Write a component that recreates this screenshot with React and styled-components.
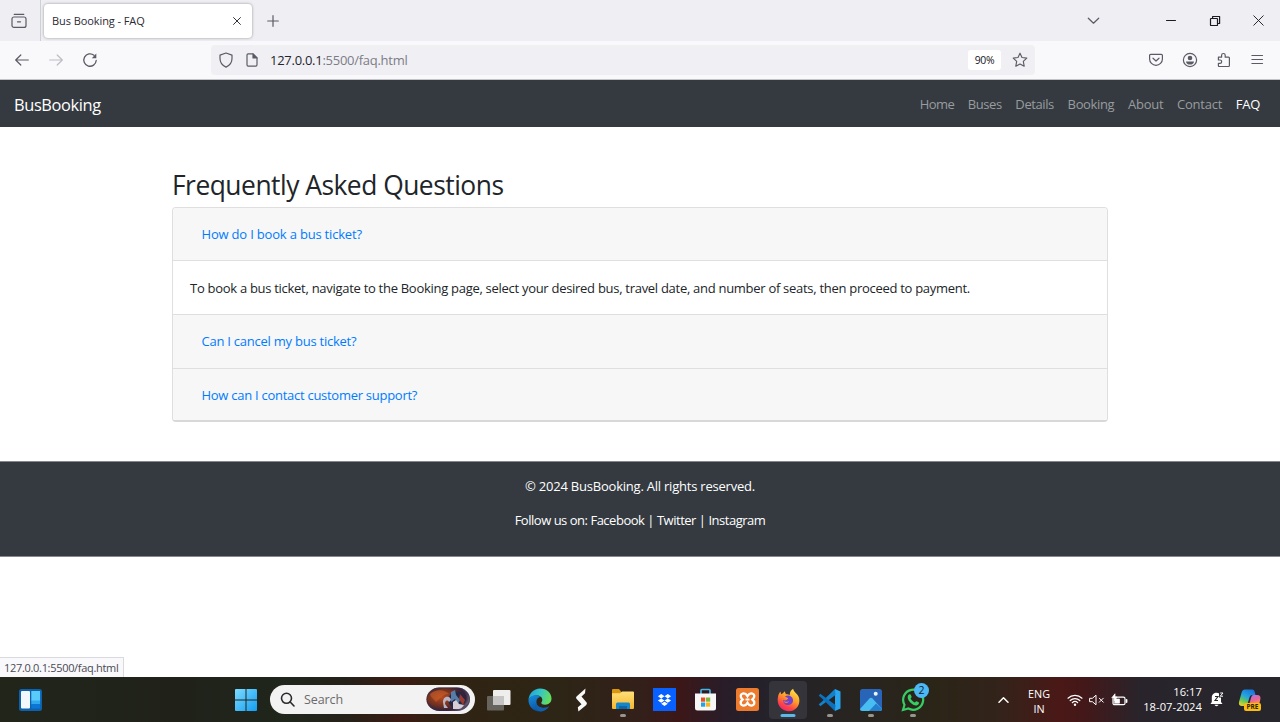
import React from "react";
import styled, { createGlobalStyle, css } from "styled-components";

const GlobalStyle = createGlobalStyle`
  * { box-sizing: border-box; }
  body { margin: 0; background: #fff; font-family: "Open Sans", "Noto Sans", sans-serif; color: #212529; }
  h1, p { margin: 0; font-weight: 400; }
  svg { display: block; flex: none; }
`;

const Screen = styled.div`
  width: 1280px; height: 722px; overflow: hidden;
  display: flex; flex-direction: column; background: #fff;
`;

/* ---------- browser chrome ---------- */
const TabStrip = styled.div`
  height: 41px; flex: none; display: flex; align-items: center; background: #efeef3;
`;
const TabsButton = styled.div`
  width: 41px; height: 41px; display: flex; align-items: center; justify-content: center;
  padding-right: 3px; border-right: 1px solid #cfcfd6; color: #5b5b66;
`;
const Tab = styled.div`
  width: 208px; height: 34px; margin-left: 3px; padding: 0 11px 0 8px;
  display: flex; align-items: center; justify-content: space-between;
  background: #fff; border-radius: 4px; box-shadow: 0 0 3px rgba(0, 0, 0, 0.38);
  color: #2b2a33;
`;
const Label = styled.span`
  white-space: nowrap; font-size: ${(p) => p.$size || 11}px; letter-spacing: ${(p) => p.$track || 0}px;
`;
const NewTab = styled.div`
  margin-left: 15px; color: #5b5b66;
`;
const WindowControls = styled.div`
  margin-left: auto; display: flex; align-items: center; padding-right: 16px; color: #1c1b22;
  & > * + * { margin-left: 32px; }
  & > :nth-child(2) { margin-left: 65px; }
`;
const Toolbar = styled.div`
  height: 39px; flex: none; display: flex; align-items: center; background: #f9f9fb;
  border-bottom: 1px solid #c3c3c8; padding: 0 16px 0 14px; color: #5b5b66;
`;
const NavButtons = styled.div`
  width: 197px; display: flex; gap: 18px;
`;
const UrlBar = styled.div`
  width: 824px; height: 30px; border-radius: 4px; background: #f0f0f4;
  display: flex; align-items: center; padding: 0 7px 0 7px; gap: 11px;
`;
const Url = styled.span`
  flex: 1; padding-left: 0; font-size: 13px; letter-spacing: -0.27px; color: #7c7c86; white-space: nowrap;
  b { font-weight: 400; color: #25242d; }
`;
const Zoom = styled.span`
  width: 33px; height: 20px; border-radius: 3px; background: #fff; color: #15141a;
  display: flex; align-items: center; justify-content: center; font-size: 10.4px; letter-spacing: -0.3px;
`;
const ToolbarActions = styled.div`
  margin-left: auto; display: flex; align-items: center; gap: 18px;
`;

/* ---------- web page ---------- */
const Page = styled.div`
  flex: 1; display: flex; flex-direction: column; align-items: stretch; position: relative;
`;
const Navbar = styled.nav`
  height: 47px; display: flex; align-items: center; justify-content: space-between;
  background: #343a40; padding: 2px 20px 0 14px;
`;
const Brand = styled.span`
  color: #fff; font-size: 16.4px; letter-spacing: -0.37px;
`;
const NavList = styled.div`
  display: flex; gap: 13.7px; padding-bottom: 2px;
`;
const NavLink = styled.span`
  font-size: 13px; letter-spacing: ${(p) => p.$track}px; color: ${(p) => (p.$active ? "#fff" : "#999c9f")};
`;
const Container = styled.main`
  width: 936px; margin: 0 auto; padding-top: 42px;
`;
const Title = styled.h1`
  height: 38px; line-height: 33px; font-size: 26.4px; letter-spacing: -0.5px; white-space: nowrap;
`;
const Accordion = styled.div`
  border: 1px solid #dfdfdf; border-bottom: 2px solid #d8d8d8; border-radius: 4px; overflow: hidden;
`;
const Question = styled.div`
  height: ${(p) => p.$h}px; display: flex; align-items: center; padding: 0 0 ${(p) => p.$lift || 0}px 28.5px;
  background: #f7f7f7; color: #007bff; font-size: 13px; letter-spacing: ${(p) => p.$track}px;
  ${(p) => p.$line && css`border-bottom: 1px solid #dfdfdf;`}
`;
const Answer = styled.div`
  height: 54px; display: flex; align-items: center; padding: 1px 0 0 17px;
  border-bottom: 1px solid #dfdfdf; font-size: 13px; letter-spacing: -0.285px; white-space: nowrap;
`;
const Footer = styled.footer`
  margin-top: 39px; height: 96px; background: #343a40; border-top: 1px solid #85898c; border-bottom: 1px solid #85898c;
  display: flex; flex-direction: column; align-items: center; gap: 14px; padding-top: 14px;
  color: #fff; font-size: 13px; line-height: 20px;
`;
const FooterLine = styled.p`
  letter-spacing: ${(p) => p.$track}px;
`;
const StatusPanel = styled.div`
  position: absolute; left: 0; bottom: 0; width: 124px; height: 20px; padding-left: 4px;
  display: flex; align-items: center; background: #f9f9fb; border: 1px solid #d9d9e0;
  border-left: 0; border-bottom: 0; color: #4a4a55;
`;

/* ---------- taskbar ---------- */
const Taskbar = styled.div`
  height: 45px; flex: none; display: flex; align-items: center; color: #fff;
  background: linear-gradient(90deg, #21251a 0, #20221a 180px, #20261c 290px, #262119 350px, #3b1b13 400px,
    #302413 450px, #2d2516 560px, #33201a 640px, #3c1718 680px, #281d29 725px, #24222a 770px, #28241f 860px,
    #2b2518 935px, #33231a 1000px, #4a1817 1060px, #431819 1085px, #29242b 1140px, #27262d 1280px);
`;
const Widgets = styled.div`
  width: 225px; padding-left: 19px;
`;
const Cell = styled.div`
  position: relative; width: ${(p) => p.$w || 41.4}px; height: 45px; flex: none;
  display: flex; align-items: center; justify-content: center;
`;
const AppTile = styled.div`
  width: 38px; height: 38px; border-radius: 4px; display: flex; align-items: center; justify-content: center;
  ${(p) => p.$active && css`background: #34343a;`}
`;
const Running = styled.span`
  position: absolute; bottom: 5px; left: 50%; transform: translateX(-50%);
  width: ${(p) => (p.$active ? 15 : 6)}px; height: 3px; border-radius: 2px;
  background: ${(p) => (p.$active ? "#5cb8e6" : "#98948e")};
`;
const Badge = styled.span`
  position: absolute; left: 22px; top: 6px; width: 15px; height: 15px; border-radius: 50%;
  background: #4cb8f5; color: #10202c; font-size: 10.5px; line-height: 15px; text-align: center;
`;
const SearchBox = styled.div`
  width: 205px; height: 29px; margin: 0 3px 0 3px; border-radius: 15px; background: #f3f2f2;
  display: flex; align-items: center; padding: 0 4px 0 10px; color: #2a2a2a;
`;
const SearchText = styled.span`
  flex: 1; margin-left: 9px; font-size: 12.5px; letter-spacing: -0.1px; color: #6a6a6a;
`;
const Tray = styled.div`
  margin-left: auto; display: flex; align-items: center; padding-right: 18px;
`;
const Lang = styled.div`
  width: 36px; margin: 0 10px 0 12px; padding-top: 2px; font-size: 10.8px; line-height: 15px; text-align: center;
`;
const Clock = styled.div`
  width: 64px; margin: 0 8px 0 10px; padding-bottom: 1px; font-size: 11.2px; line-height: 15px; text-align: right;
  white-space: nowrap; letter-spacing: 0.05px;
`;

const Svg = ({ w = 16, h, box, children, sw = 1.2 }) => (
  <svg width={w} height={h || w} viewBox={box || `0 0 ${w} ${h || w}`} fill="none" stroke="currentColor"
    strokeWidth={sw} strokeLinecap="round" strokeLinejoin="round">{children}</svg>
);

const RecentTabsIcon = () => (
  <Svg w={16}><path d="M3.2 1.3h9.6" /><rect x="1" y="4" width="14" height="10.4" rx="2" /><path d="M6.5 8.8h3" /></Svg>
);
const CloseIcon = ({ s = 8, sw = 1.2 }) => <Svg w={s} sw={sw} box="0 0 10 10"><path d="M.7.7l8.6 8.6M9.3.7L.7 9.3" /></Svg>;
const PlusIcon = () => <Svg w={12}><path d="M6 .7v10.6M.7 6h10.6" /></Svg>;
const ChevronIcon = () => <Svg w={13} h={8}><path d="M1.3 1.2l5.2 5 5.2-5" stroke="#5b5b66" /></Svg>;
const MinimizeIcon = () => <Svg w={12}><path d="M1.5 5.500h9" strokeWidth="1" /></Svg>;
const RestoreIcon = () => (
  <Svg w={12}><rect x="1.5" y="3.5" width="7" height="7" rx=".6" /><path d="M3.6 3.2V1.5h7v7H8.8" /></Svg>
);
const BackIcon = () => <Svg w={16}><path d="M14.3 8H1.7M6.8 3L1.7 8l5.1 5" /></Svg>;
const ForwardIcon = () => <Svg w={16}><path d="M1.7 8h12.6M9.2 3l5.1 5-5.1 5" stroke="#bdbdc4" /></Svg>;
const ReloadIcon = () => (
  <Svg w={16} sw={1.3}><path d="M14.2 8.5A6.2 6.2 0 1 1 12 3.3" /><path d="M14.3 1.6v4.6H9.8z" fill="currentColor" stroke="none" /></Svg>
);
const ShieldIcon = () => <Svg w={16}><path d="M8 1l6 2.1v3.5c0 4-2.8 7.2-6 8.5-3.2-1.3-6-4.500-6-8.500V3.1z" /></Svg>;
const FileIcon = () => (
  <Svg w={14} h={16}><path d="M3.2 1.8H8l4 4v7c0 .8-.4 1.3-1.2 1.3H3.2c-.8 0-1.2-.5-1.2-1.3V3c0-.8.4-1.2 1.2-1.2z" /><path d="M8 2v4h4z" fill="currentColor" /></Svg>
);
const StarIcon = () => (
  <Svg w={16} sw={1.15}><path d="M8 1.2l2 4.3 4.8.6-3.5 3.3.9 4.8L8 11.9l-4.2 2.3.9-4.8L1.2 6.1 6 5.5z" /></Svg>
);
const PocketIcon = () => <Svg w={16}><path d="M2.7 2.3h10.6c.7 0 1.1.4 1.1 1.1v3.5a6.4 6.4 0 0 1-12.8 0V3.4c0-.7.4-1.1 1.1-1.1z" /><path d="M5 6.2l3 2.8 3-2.8" /></Svg>;
const AccountIcon = () => (
  <Svg w={16}><circle cx="8" cy="8" r="6.6" /><circle cx="8" cy="6" r="2.3" fill="currentColor" stroke="none" /><path d="M4 9.4h8c0 2-1.7 3.2-4 3.2S4 11.4 4 9.4z" fill="currentColor" stroke="none" /></Svg>
);
const ExtensionIcon = () => (
  <Svg w={16}><path d="M2.4 5.200h3.200V3.300a1.800 1.800 0 0 1 3.600 0v1.900h3.300c.6 0 .9.3.9.9v7.500c0 .6-.3.9-.9.9H3.300c-.6 0-.9-.3-.9-.9v-2.300h1.600a1.600 1.600 0 0 0 0-3.300H2.400z" /></Svg>
);
const MenuIcon = () => <Svg w={14} h={14}><path d="M1.9 2.500h10.600M1.9 6.500h10.600M1.9 10.500h10.600" /></Svg>;

const WidgetsIcon = () => (
  <svg width="23" height="22" viewBox="0 0 23 22">
    <rect width="23" height="22" rx="2.5" fill="#0c62ae" />
    <rect x="2" y="2" width="9" height="17.5" rx="1" fill="#f3f8fd" />
    <rect x="12.3" y="2" width="8.8" height="10" fill="#59cbfa" />
    <rect x="12.3" y="11.5" width="8.8" height="4" fill="#31a8ee" />
    <rect x="12.3" y="15" width="8.8" height="4.5" fill="#0b76d6" />
  </svg>
);
const StartIcon = () => (
  <svg width="22" height="22" viewBox="0 0 22 22">
    <defs><linearGradient id="start" x2="1" y2="1"><stop stopColor="#7bdcff" /><stop offset="1" stopColor="#139df2" /></linearGradient></defs>
    <path d="M0 1q0-1 1-1h9.500v10.500H0zM11.500 0H21q1 0 1 1v9.500H11.500zM0 11.500h10.500V22H1q-1 0-1-1zM11.500 11.500H22V21q0 1-1 1h-9.500z" fill="url(#start)" />
  </svg>
);
const SearchIcon = () => <Svg w={15} sw={1.6}><circle cx="6.5" cy="6.3" r="5" /><path d="M10.2 10l3.8 4" /></Svg>;
const SearchArt = () => (
  <svg width="45" height="25" viewBox="0 0 45 25">
    <defs>
      <radialGradient id="art" cx=".35" cy=".42" r=".65"><stop stopColor="#b64a20" /><stop offset=".5" stopColor="#71301f" /><stop offset=".82" stopColor="#30213a" /><stop offset="1" stopColor="#82798e" /></radialGradient>
      <clipPath id="artClip"><rect x=".5" y=".5" width="43.500" height="23.500" rx="13" /></clipPath>
      <filter id="artSoft"><feGaussianBlur stdDeviation=".6" /></filter>
    </defs>
    <g clipPath="url(#artClip)">
      <rect width="45" height="25" fill="url(#art)" />
      <g filter="url(#artSoft)">
        <path d="M4 7c6-5 14-5 19 0-6 0-8 4-13 8-3-4-5-4-6-8z" fill="#cf602c" opacity=".55" />
        <path d="M24 8c5-6 13-4 15 3l-3 8-9 2c-5-4-6-8-3-13z" fill="#252844" />
        <path d="M17 15c0-6 7-7 8-2l-2 2c-2-3-4-1-4 2l3 4h-4z" fill="#b9b4c4" />
        <path d="M25 5l4-2 1 5 4 5-2 4-3-5-4 3z" fill="#577ba8" />
        <path d="M27 15l3-2 3 4 5 1-3 4h-8z" fill="#d5ced6" />
        <path d="M34 7l5 6-2 5-4-6z" fill="#9a3b30" />
      </g>
      <ellipse cx="22.3" cy="12.3" rx="22.5" ry="12.8" fill="none" stroke="#3a2c48" strokeWidth="3" opacity=".6" />
    </g>
  </svg>
);
const TaskViewIcon = () => (
  <svg width="24" height="22" viewBox="0 0 24 22">
    <rect x="0" y="7" width="17" height="14.5" rx="1" fill="#67645d" />
    <rect x="6" y="1" width="17.5" height="15" rx="1" fill="#eeeeed" />
    <path d="M6 7h11v9H6z" fill="#c6c5c3" />
  </svg>
);
const EdgeIcon = () => (
  <svg width="24" height="24" viewBox="0 0 24 24">
    <defs>
      <linearGradient id="edgeTop" x2="1" y2=".3"><stop stopColor="#1c9fdf" /><stop offset=".55" stopColor="#36c6c4" /><stop offset="1" stopColor="#63dc62" /></linearGradient>
      <linearGradient id="edgeLow" x2=".5" y2="1"><stop stopColor="#1690dd" /><stop offset="1" stopColor="#0b4e9f" /></linearGradient>
    </defs>
    <path d="M.5 12C.8 5.5 5.8.5 12 .5c7 0 11.500 4.800 11.500 10 0 4-3 6.200-6.200 6.200-3 0-4-1-4-2 0-.7 1-1.200 1-3 0-2.500-2.400-4.200-5.300-4.200C5 7.500 1.500 9 .5 12z" fill="url(#edgeTop)" />
    <path d="M.5 12c.8-3.300 4.500-5 8-4.700 1.600.2 2.900.8 3.700 1.700-3 .8-4 3-3.800 5.500.3 4 5.600 7 12.600 4.100-2 3-5.200 4.900-9 4.900C5.200 23.500.2 18 .5 12z" fill="url(#edgeLow)" />
    <path d="M8.400 14.500c.3 4.500 6.600 7.300 12.600 4.100-1.400 2.700-4.600 4.600-8 4.900-4.500-.8-7-4.500-4.600-9z" fill="#1260aa" />
  </svg>
);
const BoltIcon = () => (
  <svg width="13" height="24" viewBox="0 0 13 24" fill="#f8f8f7">
    <path d="M10.500.5L1.800 8.300c-1 1-.9 1.800-.1 2.700l4.800 5.200-3.700 3 .6 4.300 7.600-6.300c1.200-1 1.200-2 .2-3.100L6.500 8.600 10 5.300z" />
  </svg>
);
const FolderIcon = () => (
  <svg width="24" height="23" viewBox="0 0 24 23">
    <defs><linearGradient id="folder" y2="1" x2="0"><stop stopColor="#ffe07a" /><stop offset="1" stopColor="#f4b62d" /></linearGradient></defs>
    <path d="M1 2q0-1 1-1h6l2 2.500V8H1z" fill="#d99610" />
    <path d="M1 5.300h8l2-1.800h11q1 0 1 1V20q0 1-1 1H2q-1 0-1-1z" fill="url(#folder)" />
    <path d="M5 21v-5q0-1.500 1.500-1.500h11q1.500 0 1.500 1.500v5z" fill="#1686cb" /><path d="M8 18h8v3H8z" fill="#0d66a8" />
  </svg>
);
const DropboxIcon = () => (
  <svg width="23" height="23" viewBox="0 0 23 23">
    <rect width="23" height="23" fill="#0861ff" />
    <path d="M8.200 6l3.300 2.200-3.300 2.200-3.300-2.200zM14.800 6l3.300 2.200-3.300 2.200-3.300-2.200zM8.200 10.400l3.300 2.200-3.300 2.200-3.300-2.200zM14.800 10.400l3.300 2.200-3.300 2.200-3.300-2.200zM11.500 13.700l3.300 2.100-3.300 2.100-3.300-2.100z" fill="#fff" />
  </svg>
);
const StoreIcon = () => (
  <svg width="23" height="24" viewBox="0 0 23 24">
    <path d="M7 6V2.500Q7 1.500 8 1.500h7q1 0 1 1V6" fill="none" stroke="#42b5e9" strokeWidth="1.7" />
    <path d="M1 5.500h21V20q0 2.500-2.500 2.500h-16Q1 22.500 1 20z" fill="#f7f7f8" />
    <path d="M7 9.500h4.200v4.200H7z" fill="#e65123" /><path d="M12 9.500h4.200v4.200H12z" fill="#80b83b" />
    <path d="M7 14.500h4.200v4.200H7z" fill="#25a3e1" /><path d="M12 14.500h4.200v4.200H12z" fill="#f7b525" />
  </svg>
);
const XamppIcon = () => (
  <svg width="23" height="23" viewBox="0 0 23 23">
    <rect width="23" height="23" rx="2.5" fill="#ed7b2e" />
    <path d="M7 5.500c2.500-.5 3.500 1 4.500 2.700 1-1.700 2-3.200 4.500-2.700 3 .7 3 4 .4 6 2.600 2 2.600 5.300-.4 6-2.500.5-3.500-1-4.500-2.700-1 1.700-2 3.200-4.500 2.700-3-.7-3-4-.4-6-2.600-2-2.600-5.300.4-6z" fill="none" stroke="#fff" strokeWidth="2.3" />
    <path d="M9.500 11.500h4" stroke="#fff" strokeWidth="2" />
  </svg>
);
const FirefoxIcon = () => (
  <svg width="23" height="24" viewBox="0 0 23 24">
    <defs><linearGradient id="fox" x1=".8" y1="0" x2=".25" y2="1"><stop stopColor="#ffe84b" /><stop offset=".45" stopColor="#ff9a2a" /><stop offset=".75" stopColor="#ff4546" /><stop offset="1" stopColor="#e82472" /></linearGradient></defs>
    <path d="M1 9c.2-2 1.200-4 2.500-5.500.1 1.300.4 2 1 2.700C6 5.600 6.800 4.200 8 3.300c0 1.500.5 2.500 1.500 3 1.500 0 2.500.2 3.300.9C12.500 4.500 14 2 16.200.8c0 3 4.300 4.700 5.700 8.700 2 6.500-2.400 13.700-10 13.700C4.500 23.200-.8 17 1 9z" fill="url(#fox)" />
    <path d="M8 8.600c1.500-1.300 4.500-1.500 6.300.1 3 2.500 2.200 7.600-2.500 8.300-3.300.4-6-2-5.600-5 1.300.7 2.800.6 4-.4.9-.7 1.300-1.200.5-1.600-1-.5-1.800-.5-2.700-1.400z" fill="#7042cf" />
    <path d="M6.200 12.500c1.400 1.500 4 2 5.800.2-1 3-4.800 3-5.800-.2z" fill="#ff8b2e" />
  </svg>
);
const CodeIcon = () => (
  <svg width="24" height="24" viewBox="0 0 24 24">
    <path d="M17 1v22l5.500-2.600V3.600z" fill="#29a6ee" />
    <path d="M17 1L3 14.500.7 16.300l1.600 2L17.500 7z" fill="#1382cc" />
    <path d="M17 23L3 9.500.7 7.700l1.600-2L17.500 17z" fill="#0c72bd" />
  </svg>
);
const PhotosIcon = () => (
  <svg width="22" height="22" viewBox="0 0 22 22">
    <defs><clipPath id="ph"><rect width="22" height="22" rx="2.5" /></clipPath></defs>
    <g clipPath="url(#ph)">
      <rect width="22" height="22" fill="#2865b9" /><path d="M0 20L9.500 9.500q1.500-1.500 3 0L23 21v3H0z" fill="#48bdf2" />
      <path d="M9 22l7-7.500 7 6.500v2z" fill="#237fce" /><circle cx="15.7" cy="4.7" r="2" fill="#e9f5ff" />
    </g>
  </svg>
);
const WhatsAppIcon = () => (
  <svg width="24" height="24" viewBox="0 0 24 24">
    <path d="M2 22l1.500-5.300A10 10 0 1 1 7.400 20.500z" fill="none" stroke="#36ce64" strokeWidth="2.2" />
    <path d="M8.300 6.300c.8-.4 1.300 0 1.600.8l.7 1.700c.2.6-.8 1.300-1 1.700.9 1.900 2.200 3.100 4.200 4 .5-.4 1.200-1.500 1.700-1.300l2.200 1.100c.8.5-.2 2.800-1.900 3.200-3.600.8-9-4.200-9.100-7.900 0-1.400.6-2.700 1.600-3.300z" fill="#36ce64" />
  </svg>
);
const TrayChevron = () => <Svg w={11} h={8} sw={1.5}><path d="M1 6.300l4.500-4.500L10 6.300" /></Svg>;
const WifiIcon = () => (
  <Svg w={16} h={14} sw={1.2}><path d="M1 5.200a10 10 0 0 1 14 0M3.200 7.500a6.900 6.900 0 0 1 9.600 0M5.300 9.700a3.900 3.900 0 0 1 5.400 0" /><circle cx="8" cy="11.7" r="1.2" fill="currentColor" stroke="none" /></Svg>
);
const MuteIcon = () => <Svg w={16} h={12} sw={1}><path d="M1 4.300h2.400L7 1.200v9.600L3.400 7.700H1z" /><path d="M10.300 4.200l4 4M14.300 4.200l-4 4" /></Svg>;
const BatteryIcon = () => (
  <Svg w={17} h={14} sw={1.2}><rect x="2" y="4.2" width="12" height="7.5" rx="1.5" /><path d="M15.600 6.800v2.400" strokeWidth="1.6" /><path d="M3.500 6h5v4.200h-5zM1 4.500L4 .8V4h2L3.500 8V5z" fill="currentColor" strokeWidth=".7" /></Svg>
);
const BellIcon = () => (
  <svg width="14" height="15" viewBox="0 0 14 15">
    <path d="M1.800 5.500C1.800 2.500 4 .8 6.500.8S11 2.500 11 5v5l1.500 1.900H.5L1.800 10z" fill="#fff" />
    <path d="M4.500 12.700h4c-.5 1.900-3.500 1.900-4 0z" fill="#fff" />
    <path d="M5 4.500h3L5 8.500h3" fill="none" stroke="#2a2a2e" strokeWidth="1.1" />
    <path d="M9 0h5v5.500H9z" fill="#27262d" /><path d="M10.200 1h2.800l-2.800 3.200H13" fill="none" stroke="#fff" strokeWidth="1" />
  </svg>
);
const CopilotMark = styled.div`
  position: relative; width: 24px; height: 24px; margin-left: 14px;
`;
const PreTag = styled.span`
  position: absolute; left: 6px; top: 15px; width: 17px; height: 8px; border-radius: 2px; background: #fbbd13;
  color: #302400; font-size: 6.5px; font-weight: 700; line-height: 8px; text-align: center;
`;
const CopilotIcon = () => (
  <svg width="24" height="24" viewBox="0 0 24 24">
    <defs>
      <linearGradient id="cpA" x1=".7" x2=".2" y2="1"><stop stopColor="#1874dc" /><stop offset=".45" stopColor="#25a7df" /><stop offset=".7" stopColor="#61c65a" /><stop offset="1" stopColor="#e6d22d" /></linearGradient>
      <linearGradient id="cpB" x2=".4" y2="1"><stop stopColor="#a773ef" /><stop offset=".6" stopColor="#ec6493" /><stop offset="1" stopColor="#fc9a58" /></linearGradient>
    </defs>
    <path d="M7 1.500h7c2 0 2.500 1.500 3 3.500l.5 2h-3c-2 0-2.600 1-3.200 3L9.500 16c-.5 1.500-1.300 2-3 2H4c-2.500 0-3.500-1.500-3-4L3.500 5c.6-2.300 1.500-3.500 3.500-3.500z" fill="url(#cpA)" />
    <path d="M15.500 7H19c3 0 4 1.700 3.300 4.500L21 17H11l2-7c.6-2 1.200-3 2.500-3z" fill="url(#cpB)" />
  </svg>
);

const LINKS = [
  { text: "Home", track: -0.6 },
  { text: "Buses", track: -0.45 },
  { text: "Details", track: -0.4 },
  { text: "Booking", track: -0.35 },
  { text: "About", track: -0.25 },
  { text: "Contact", track: -0.25 },
  { text: "FAQ", track: -0.25 },
];
const APPS = [
  { id: "view", Icon: TaskViewIcon },
  { id: "edge", Icon: EdgeIcon },
  { id: "bolt", Icon: BoltIcon },
  { id: "files", Icon: FolderIcon, running: true },
  { id: "dropbox", Icon: DropboxIcon },
  { id: "store", Icon: StoreIcon },
  { id: "xampp", Icon: XamppIcon },
  { id: "firefox", Icon: FirefoxIcon, running: true, active: true },
  { id: "code", Icon: CodeIcon, running: true },
  { id: "photos", Icon: PhotosIcon, running: true },
  { id: "whatsapp", Icon: WhatsAppIcon, running: true, badge: "2" },
];

export default function App() {
  return (
    <Screen>
      <GlobalStyle />
      <TabStrip>
        <TabsButton><RecentTabsIcon /></TabsButton>
        <Tab><Label $size={11} $track={-0.08}>Bus Booking - FAQ</Label><CloseIcon /></Tab>
        <NewTab><PlusIcon /></NewTab>
        <WindowControls><ChevronIcon /><MinimizeIcon /><RestoreIcon /><CloseIcon s={11} sw={0.85} /></WindowControls>
      </TabStrip>
      <Toolbar>
        <NavButtons><BackIcon /><ForwardIcon /><ReloadIcon /></NavButtons>
        <UrlBar>
          <ShieldIcon /><FileIcon />
          <Url><b>127.0.0.1</b>:5500/faq.html</Url>
          <Zoom>90%</Zoom><StarIcon />
        </UrlBar>
        <ToolbarActions><PocketIcon /><AccountIcon /><ExtensionIcon /><MenuIcon /></ToolbarActions>
      </Toolbar>
      <Page>
        <Navbar>
          <Brand>BusBooking</Brand>
          <NavList>
            {LINKS.map((l) => <NavLink key={l.text} $track={l.track} $active={l.text === "FAQ"}>{l.text}</NavLink>)}
          </NavList>
        </Navbar>
        <Container>
          <Title>Frequently Asked Questions</Title>
          <Accordion>
            <Question $h={53} $track={-0.19} $line>How do I book a bus ticket?</Question>
            <Answer>To book a bus ticket, navigate to the Booking page, select your desired bus, travel date, and number of seats, then proceed to payment.</Answer>
            <Question $h={54} $track={-0.24} $lift={1} $line>Can I cancel my bus ticket?</Question>
            <Question $h={51} $track={-0.27}>How can I contact customer support?</Question>
          </Accordion>
        </Container>
        <Footer>
          <FooterLine $track={-0.22}>© 2024 BusBooking. All rights reserved.</FooterLine>
          <FooterLine $track={-0.48}>Follow us on: Facebook | Twitter | Instagram</FooterLine>
        </Footer>
        <StatusPanel><Label $size={11} $track={-0.31}>127.0.0.1:5500/faq.html</Label></StatusPanel>
      </Page>
      <Taskbar>
        <Widgets><WidgetsIcon /></Widgets>
        <Cell $w={42}><StartIcon /></Cell>
        <SearchBox><SearchIcon /><SearchText>Search</SearchText><SearchArt /></SearchBox>
        {APPS.map(({ id, Icon, running, active, badge }) => (
          <Cell key={id}>
            <AppTile $active={active}><Icon /></AppTile>
            {running && <Running $active={active} />}
            {badge && <Badge>{badge}</Badge>}
          </Cell>
        ))}
        <Tray>
          <TrayChevron />
          <Lang>ENG<br />IN</Lang>
          <WifiIcon />
          <Cell $w={28}><MuteIcon /></Cell>
          <BatteryIcon />
          <Clock>16:17<br />18-07-2024</Clock>
          <BellIcon />
          <CopilotMark><CopilotIcon /><PreTag>PRE</PreTag></CopilotMark>
        </Tray>
      </Taskbar>
    </Screen>
  );
}
